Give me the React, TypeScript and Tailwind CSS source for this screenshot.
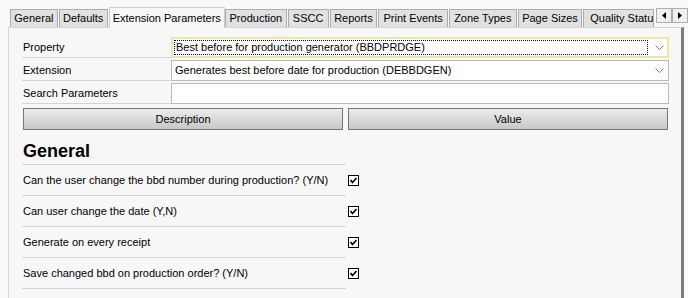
import React from 'react';

type Tab = { label: string; cls: string; active?: boolean; clip?: boolean };

const tabs: Tab[] = [
  { label: 'General', cls: 'w-[48px]' },
  { label: 'Defaults', cls: 'w-[49px]' },
  { label: 'Extension Parameters', cls: 'w-[117px]', active: true },
  { label: 'Production', cls: 'w-[62px]' },
  { label: 'SSCC', cls: 'w-[41px]' },
  { label: 'Reports', cls: 'w-[48px]' },
  { label: 'Print Events', cls: 'w-[70px]' },
  { label: 'Zone Types', cls: 'w-[68px]' },
  { label: 'Page Sizes', cls: 'w-[65px]' },
  { label: 'Quality Status', cls: 'w-[71px]', clip: true },
];

const params = [
  'Can the user change the bbd number during production? (Y/N)',
  'Can user change the date (Y,N)',
  'Generate on every receipt',
  'Save changed bbd on production order? (Y/N)',
];

function Chevron() {
  return (
    <svg width="9" height="6" viewBox="0 0 9 6" className="shrink-0">
      <polyline points="0.5,0.5 4.5,4.5 8.5,0.5" fill="none" stroke="#7a7a7a" strokeWidth="1" />
    </svg>
  );
}

function CheckBox() {
  return (
    <svg width="11" height="11" viewBox="0 0 11 11">
      <rect x="0.5" y="0.5" width="10" height="10" fill="#fff" stroke="#000" strokeWidth="1" />
      <polyline points="2.5,5 4.5,7.5 8.5,3" fill="none" stroke="#000" strokeWidth="1.6" />
    </svg>
  );
}

function ArrowBtn({ dir }: { dir: 'left' | 'right' }) {
  return (
    <div className="w-[16px] h-[15px] border border-[#adadad] bg-[#f0f0f0] flex items-center justify-center">
      <svg width="4" height="7" viewBox="0 0 4 7">
        {dir === 'left' ? (
          <polygon points="4,0 0,3.5 4,7" fill="#000" />
        ) : (
          <polygon points="0,0 4,3.5 0,7" fill="#000" />
        )}
      </svg>
    </div>
  );
}

export default function App() {
  return (
    <div className="w-[688px] h-[298px] overflow-hidden bg-[#f9f9f9] text-black text-[11px] font-['Liberation_Sans',Arial,sans-serif]">
      {/* tab strip */}
      <div className="h-[27px] flex items-end pl-[10px]">
        {tabs.map((t) =>
          t.active ? (
            <div
              key={t.label}
              className={`${t.cls} h-[21px] -mb-px relative z-10 bg-[#f7f7f7] border border-b-0 border-[#cfcfcf] flex items-center justify-center whitespace-nowrap`}
            >
              {t.label}
            </div>
          ) : (
            <div
              key={t.label}
              className={`${t.cls} h-[18px] mr-px bg-[#e1e1e1] border border-b-0 border-[#acacac] flex items-center whitespace-nowrap overflow-hidden ${
                t.clip ? 'justify-start pl-[6px]' : 'justify-center'
              }`}
            >
              {t.label}
            </div>
          )
        )}
        <div className="flex mb-[4px] ml-px">
          <ArrowBtn dir="left" />
          <ArrowBtn dir="right" />
        </div>
      </div>

      {/* panel */}
      <div className="ml-[8px] w-[676px] h-[271px] bg-[#f7f7f7] border-l border-t border-[#d5d5d5] border-r-[3px] border-r-[#7c7c7c] pl-[13px] pt-[9px]">
        <div className="flex flex-col gap-[2px]">
          <div className="flex h-[21px]">
            <div className="w-[149px] border-b border-[#d4d4d4] flex items-center pl-px">Property</div>
            <div className="w-[498px] bg-white border-2 border-[#efe6a2] flex items-center pl-px pr-[3px]">
              <div className="flex-1 h-[15px] border border-dotted border-[#000080] flex items-center pl-[1px] mr-[7px] whitespace-nowrap">
                Best before for production generator (BBDPRDGE)
              </div>
              <Chevron />
            </div>
          </div>
          <div className="flex h-[21px]">
            <div className="w-[149px] border-b border-[#d4d4d4] flex items-center pl-px">Extension</div>
            <div className="w-[498px] bg-white border border-[#bababa] flex items-center pl-[3px] pr-[4px]">
              <span className="flex-1 whitespace-nowrap">Generates best before date for production (DEBBDGEN)</span>
              <Chevron />
            </div>
          </div>
          <div className="flex h-[21px]">
            <div className="w-[149px] border-b border-[#d4d4d4] flex items-center pl-px">Search Parameters</div>
            <div className="w-[498px] bg-white border border-[#bababa]" />
          </div>
        </div>

        <div className="flex gap-[5px] mt-[4px] pl-px">
          <div className="w-[320px] h-[22px] border border-[#767676] bg-linear-to-b from-[#ededed] to-[#c7c7c7] flex items-center justify-center">
            Description
          </div>
          <div className="w-[320px] h-[22px] border border-[#767676] bg-linear-to-b from-[#ededed] to-[#c7c7c7] flex items-center justify-center">
            Value
          </div>
        </div>

        <div className="mt-[10px] w-[324px] h-[25px] border-b border-[#d4d4d4] text-[18px] font-bold leading-[22px] pl-px">
          General
        </div>

        {params.map((p) => (
          <div key={p} className="flex h-[31px]">
            <div className="w-[324px] border-b border-[#d4d4d4] flex items-center pl-px">{p}</div>
            <div className="flex items-center pl-[2px]">
              <CheckBox />
            </div>
          </div>
        ))}
      </div>
    </div>
  );
}
